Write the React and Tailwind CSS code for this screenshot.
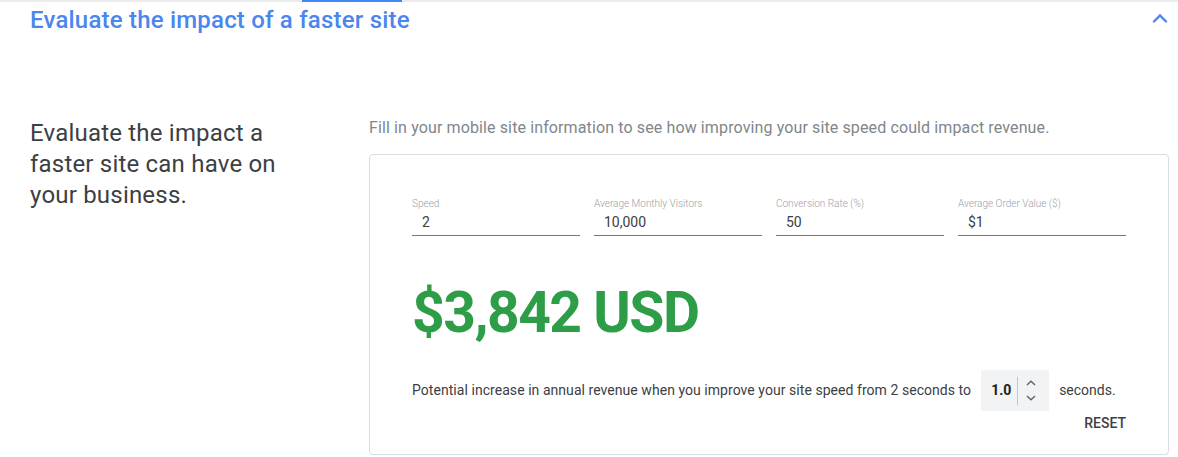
const fields = [
  { label: 'Speed', value: '2' },
  { label: 'Average Monthly Visitors', value: '10,000' },
  { label: 'Conversion Rate (%)', value: '50' },
  { label: 'Average Order Value ($)', value: '$1' },
];

const Field = ({ label, value }) => (
  <div className="w-[168px] border-b border-[#757575]">
    <div className="mt-[1px] text-[10px] leading-[12px] font-light text-[#9aa0a6]">{label}</div>
    <div className="mt-[2px] pl-[10px] pb-[3px] text-[14px] leading-[20px] text-[#3c4043]">{value}</div>
  </div>
);

const App = () => {
  return (
    <div className="w-[1178px] h-[457px] bg-white overflow-hidden" style={{ fontFamily: 'Roboto, "Open Sans", sans-serif' }}>
      <div className="h-[2px] bg-[#ececec]">
        <div className="ml-[302px] w-[100px] h-[2px] bg-[#4285f4]" />
      </div>

      <div className="flex items-center justify-between pl-[30px] pr-[10px] h-[36px]">
        <h2 className="text-[24px] font-medium text-[#4a86ee] tracking-[0.2px]">Evaluate the impact of a faster site</h2>
        <svg width="16" height="10" viewBox="0 0 16 10" className="mt-[-4px]">
          <path d="M2 8.5 L8 2.5 L14 8.5" fill="none" stroke="#4a86ee" strokeWidth="2.4" strokeLinecap="round" />
        </svg>
      </div>

      <div className="flex pl-[30px] mt-[78px]">
        <div className="w-[339px] pt-[2px]">
          <p className="text-[24px] leading-[31px] text-[#3c4043] w-[270px] tracking-[0.2px]">
            Evaluate the impact a faster site can have on your business.
          </p>
        </div>

        <div className="w-[800px]">
          <p className="text-[16px] leading-[24px] text-[#80868b] tracking-[0.12px]">
            Fill in your mobile site information to see how improving your site speed could impact revenue.
          </p>
          <div className="mt-[14px] h-[301px] border border-[#dadce0] rounded-[4px] px-[42px] pt-[42px]">
            <div className="flex justify-between">
              {fields.map((f) => (
                <Field key={f.label} label={f.label} value={f.value} />
              ))}
            </div>

            <div className="mt-[48px] text-[57px] leading-[58px] font-bold text-[#2e9d47] tracking-[-1.5px]">
              $3,842 USD
            </div>

            <div className="mt-[28px] flex items-center text-[14px] text-[#3c4043]">
              <span className="tracking-[0.05px]">Potential increase in annual revenue when you improve your site speed from 2 seconds to</span>
              <div className="ml-[10px] flex items-center h-[41px] w-[68px] bg-[#f1f3f4]">
                <span className="w-[36px] pl-[10px] font-bold text-[#202124]">1.0</span>
                <div className="h-[28px] w-px bg-[#c4c7ca]" />
                <div className="flex flex-col items-center justify-center gap-[9px] w-[26px]">
                  <svg width="10" height="6" viewBox="0 0 10 6">
                    <path d="M1 5 L5 1.2 L9 5" fill="none" stroke="#5f6368" strokeWidth="1.4" />
                  </svg>
                  <svg width="10" height="6" viewBox="0 0 10 6">
                    <path d="M1 1 L5 4.8 L9 1" fill="none" stroke="#5f6368" strokeWidth="1.4" />
                  </svg>
                </div>
              </div>
              <span className="ml-[10px]">seconds.</span>
            </div>

            <div className="flex justify-end mt-[2px]">
              <span className="text-[14px] font-medium text-[#3c4043]">RESET</span>
            </div>
          </div>
        </div>
      </div>
    </div>
  );
};

export default App;
